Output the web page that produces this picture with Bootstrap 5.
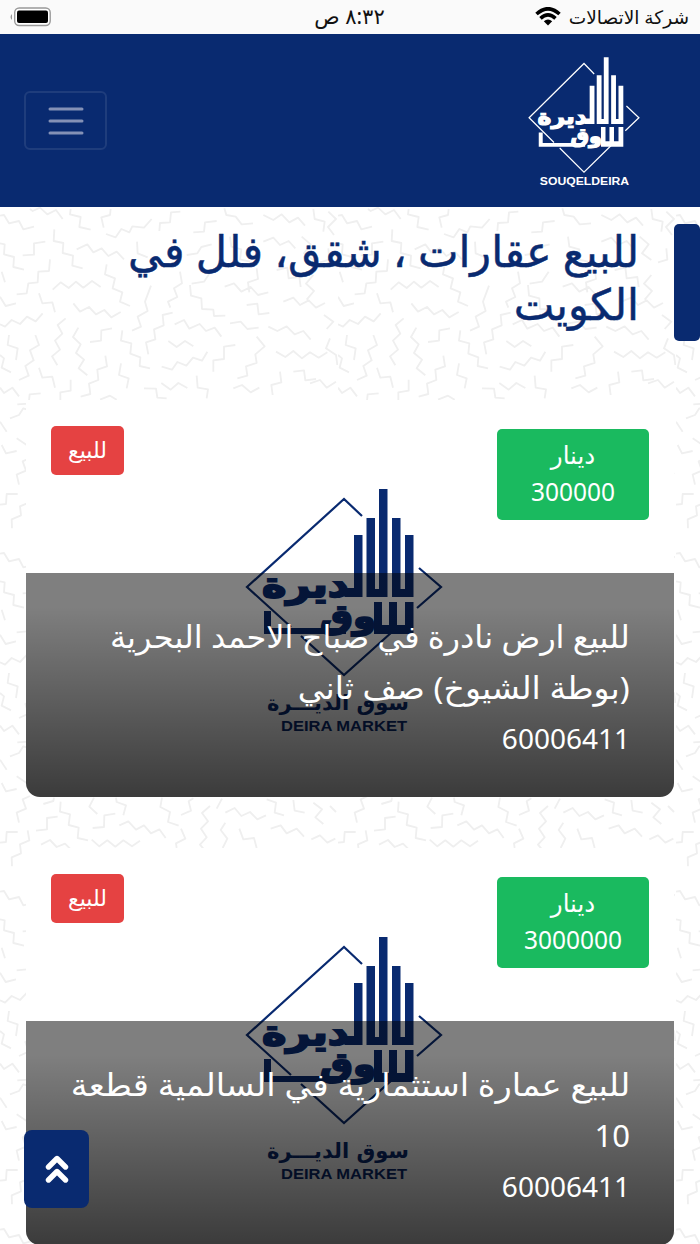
<!DOCTYPE html>
<html lang="ar" dir="rtl">

<head>
    <meta charset="UTF-8">
    <meta name="viewport" content="width=device-width, initial-scale=1.0">
    <title>سوق الديرة</title>
    <link href="https://cdn.jsdelivr.net/npm/bootstrap@5.3.0/dist/css/bootstrap.min.css" rel="stylesheet">
    <style>
        body {
            font-family: "Noto Sans", "DejaVu Sans", sans-serif;
            background: #fff;
            height: 1244px;
            overflow: hidden;
            position: relative;
        }

        .status-bar {
            height: 34px;
            background: #fafafa;
            color: #111;
            font-size: 18.6px;
            padding: 0 11px 0 10px;
        }

        .status-bar > div {
            flex: 1 1 0;
        }

        .clock {
            font-size: 21px;
            line-height: 28px;
            padding-bottom: 2px;
        }

        .site-nav {
            height: 173px;
            background: #092a70;
            padding: 0 60px 0 24px;
        }

        .site-nav .navbar-brand {
            margin: 0;
            padding: 4px 0 0;
        }

        .site-nav .navbar-toggler {
            width: 83px;
            height: 59px;
            border: 2px solid rgba(255, 255, 255, .09);
            border-radius: 6px;
            padding: 0;
        }

        .brand-name {
            font: bold 10.5px "Liberation Sans", sans-serif;
            line-height: 15px;
            color: #fff;
            transform: scaleX(1.16);
        }

        .page-area {
            position: relative;
            height: 1037px;
            overflow: hidden;
        }

        .pattern-bg {
            position: absolute;
            inset: 0;
        }

        .title-row {
            position: relative;
            height: 193px;
            padding-top: 17px;
        }

        .title-bar {
            width: 26px;
            height: 117px;
            background: #092a70;
            border-radius: 5px;
        }

        .page-title {
            color: #092a70;
            font-size: 43px;
            line-height: 53px;
            margin: 0 35px 0 0;
            white-space: nowrap;
            -webkit-text-stroke: .5px #092a70;
        }

        .fit {
            display: inline-block;
            transform-origin: right center;
            white-space: nowrap;
        }

        .estate {
            position: relative;
            height: 397px;
            margin: 0 26px 51px;
            background: #fff;
            border-radius: 0 0 14px 14px;
            overflow: hidden;
        }

        .estate-tags {
            position: relative;
            padding: 26px 25px 0;
        }

        .price-tag {
            width: 152px;
            height: 91px;
            margin-top: 3px;
            padding-bottom: 3px;
            background: #1aba5f;
            border-radius: 5px;
            font-size: 24.5px;
            line-height: 37px;
        }

        .kind-tag {
            width: 73px;
            height: 49px;
            padding-bottom: 2px;
            background: #e54242;
            border-radius: 5px;
            font-size: 22px;
        }

        .estate-logo {
            position: absolute;
            left: 219px;
            top: 87px;
            color: #092a70;
        }

        .estate-info {
            position: absolute;
            left: 0;
            right: 0;
            bottom: 0;
            height: 224px;
            padding: 38px 44px 0;
            color: #fff;
            background: linear-gradient(rgba(0, 0, 0, .5) 15%, rgba(0, 0, 0, .77));
            font-size: 31px;
            line-height: 51px;
        }

        .estate-info .phone {
            font-size: 28px;
        }

        .to-top {
            position: absolute;
            left: 24px;
            top: 1130px;
            width: 65px;
            height: 78px;
            background: #092a70;
            border: 0;
            border-radius: 8px;
        }
    </style>
</head>

<body>
    <!-- shared drawings -->
    <svg width="0" height="0" class="position-absolute">
        <defs>
            <symbol id="mark" viewBox="245 487 198 191" preserveAspectRatio="none">
                <g fill="none" stroke="currentColor" stroke-width="2.200">
                    <path d="M362 516L344 499L247 587L291 627M301 636L344 675L392 632M419 568L441 587L417 608" />
                </g>
                <path fill="currentColor" d="M354 535h8.500v62h-18v-9h9.500zM366.500 518h8.500v71h4v-100h8.500v108h-21zM392 518h8.500v71h4.500v-54h8.500v62h-21.500zM374 602h8v23h7v-23h8v23h8v-23h8.500v32h-39.500zM264 611h7v17h75v6h-82z" />
                <g fill="currentColor" stroke="currentColor" stroke-width="2" font-family="DejaVu Sans" font-weight="bold" direction="rtl">
                    <text x="349" y="597" font-size="35" textLength="87" lengthAdjust="spacingAndGlyphs">ديرة</text>
                    <text x="376" y="628" font-size="33" textLength="56" lengthAdjust="spacingAndGlyphs">وق</text>
                </g>
            </symbol>
            <pattern id="zigzag" width="338" height="338" patternUnits="userSpaceOnUse">
                <!-- drawn at three times the tile size -->
                <g transform="translate(0 -2) scale(.33333)" fill="none" stroke="#efefef" stroke-width="5.500" stroke-linejoin="round">
                    <path d="M0 32L12 30L27 55L57 48L70 73L102 65M90 12L98 18L120 8L142 28L168 15L188 42M212 12L210 28L242 36L238 66L272 74M332 12L330 30L304 37L311 68M318 87L347 97L364 72L388 82L397 64L432 68L455 42M163 73L161 108L190 114L188 144L219 152L217 182L248 190M136 110L102 115V149L68 151M0 115L14 118L12 148L42 156L40 186L72 194M230 133L262 118L280 142L305 130L325 153L350 140L372 163M150 163L147 198L115 200L113 232L85 235L80 265L50 268M5 200L15 232M158 254L182 232L206 249L228 230L250 248L276 228L302 246" />
                    <path d="M320 178L315 208L345 220L338 250L367 262L360 290L390 303M0 275L17 303L48 295M117 265L127 295L157 292L165 322M220 295L240 320L267 306L288 328L313 315L334 337L362 321M0 358L15 365L35 345L60 357L81 335L107 349L128 325M197 340L173 360L187 386L165 407L180 434L156 454L172 481M235 368L219 396L242 418L228 444L252 464L236 490L262 511M336 370L304 376L303 407L270 411M27 390L23 420L53 430L48 465M106 390L117 420L90 436L101 466L76 483L86 512L57 525M367 376L363 407L394 415L391 446L421 457L419 483L450 490M0 450L12 460L5 488L33 502M117 488L127 518L157 515L165 548M316 452L321 484L292 494L295 525L267 536L271 567L242 575M212 524V557L181 562V585M0 548L12 564L37 548L57 574M122 565L89 568L86 596L52 598M363 475L357 510L386 520L380 550M300 584L330 572L350 584" />
                    <path d="M518 323L488 330L491 361L462 373L466 403L438 412L445 448M453 242L435 290L443 318L413 335L423 365L396 377M411 110L413 145L443 157M541 20L513 22L510 52L480 54L478 78M580 82L612 80L615 52L650 48M524 358L552 345L568 371L599 357L618 378L644 368L664 395M505 408L530 426L555 408L580 424M485 485L516 494L532 471L559 482L579 458L606 467L622 440M570 240L573 272L604 280L606 312L640 314L642 333L676 332M432 550L468 551L472 578L500 580M484 534L512 554L535 534L562 549M590 512L593 548L624 553L620 580M640 500V466L672 462V425L706 420M540 200L546 235L522 250L532 276L504 290L511 308M560 150L592 145L604 126L635 118M632 200L612 230L575 236" />
                    <!-- right part of the tile -->
                    <path d="M673 10L679 30L707 35L725 58L759 55M790 30L820 45L845 28L868 52L894 38L915 62M940 12L944 42L974 50L970 80M690 95L694 125L724 133L720 163L750 170M790 110L820 98L840 120L866 108L886 130M905 95L932 118L912 145L940 165M674 245L702 235L724 260L752 246L774 270L805 262M770 190L774 222L744 232L748 262M830 195L862 188L866 220L898 216L902 246M940 210L918 236L942 258L920 284M740 300L772 296L776 328L808 324M805 365L832 378L860 364L884 388L910 378L932 404M690 355L722 350L742 372L776 368M828 440L856 456L880 438L906 460L930 442L956 458L982 442M770 395L794 424L766 448L770 474L738 484L742 512L712 520M850 290L880 278L900 300L926 286L948 308L975 294M990 400L978 430L1008 450L1012 480M930 535L960 525L980 548L1008 530M700 550L726 540L752 562L778 548M840 500L844 532L814 540L818 570M880 500L912 496L916 526L948 522M985 20L1008 42L984 66L1002 90M985 130L988 164L960 172M972 330L1000 350L980 372" />
                    <path d="M30 640L57 630L70 610L100 620M0 650L20 680M650 610L620 625L632 655M450 620L480 640L500 615L530 640M210 640L230 670L260 660L280 690M50 700L80 720L110 700M600 690L630 710L660 700M5 720L18 745L50 738M860 640L890 655M880 700L905 718" />
                    <g transform="translate(0 759)">
                        <path d="M90 0L68 10L78 38L50 50L57 80M162 5L160 15L130 24M182 17L180 47L210 55L206 87L236 95L233 126L264 133M173 62L141 66V100L108 104M282 5L268 32L292 54M348 5L350 18L378 28L370 58M346 53L313 58L312 93L278 96M358 88L385 76L408 101L432 88L453 112L478 100L497 126M123 146L150 132L170 153L195 143L210 158M275 131L298 151L322 133L346 152L370 133L396 151L420 134M0 140L18 138L20 108L53 108M83 103L88 133L60 145L63 172L35 184L36 211M486 5L481 33L510 48L504 78L536 89M580 7L566 16L573 44L543 57M630 30L606 51L624 76L603 98L620 124L600 146L610 158M666 8L650 38M543 98L556 128L528 142L530 156M676 80L662 102L682 128L668 156" />
                        <path d="M676 50L704 36L724 60L750 48L772 70L798 58M718 98L730 130L762 126L770 156M800 10L828 20L824 50L852 58M812 98L842 88L860 112L890 98L912 122M880 12L884 44L914 50M940 20L966 40L946 64L970 84M934 130L960 118L982 140L1006 128M990 30L1008 48" />
                    </g>
                </g>
            </pattern>
        </defs>
    </svg>

    <!-- phone status bar -->
    <div class="status-bar d-flex align-items-center">
        <div class="d-flex align-items-center gap-2">
            <span>شركة الاتصالات</span>
            <svg width="26" height="19" viewBox="0 0 26 19" fill="none" stroke="#000" stroke-width="3.600">
                <path d="M1.500 7Q13 -3.500 24.500 7M5.500 11.300Q13 4.500 20.500 11.300" />
                <path d="M13 18.500L8.800 14.200Q13 11 17.200 14.200Z" fill="#000" stroke="none" />
            </svg>
        </div>
        <div class="text-center clock">٨:٣٢ ص</div>
        <div class="d-flex justify-content-end">
            <svg width="41" height="20" viewBox="0 0 41 20">
                <rect x="4.700" y="1" width="35.500" height="17.500" rx="4.500" fill="#fff" stroke="#999" stroke-width="1.400" />
                <rect x="7" y="3.500" width="31" height="12.500" rx="2" />
                <path d="M2 7Q-1 10 2 13Z" fill="#999" />
            </svg>
        </div>
    </div>

    <nav class="navbar site-nav">
        <a class="navbar-brand d-flex flex-column align-items-center" href="#">
            <svg class="text-white" width="112" height="118"><use href="#mark" /></svg>
            <span class="brand-name" dir="ltr">SOUQELDEIRA</span>
        </a>
        <button class="navbar-toggler d-flex align-items-center justify-content-center" type="button" aria-label="القائمة">
            <svg width="36" height="28" viewBox="0 0 36 28" stroke="#8491b6" stroke-width="3" stroke-linecap="round">
                <path d="M2 2H34M2 14H34M2 26H34" />
            </svg>
        </button>
    </nav>

    <div class="page-area">
        <svg class="pattern-bg" width="700" height="1037">
            <rect width="700" height="1037" fill="url(#zigzag)" />
        </svg>

        <div class="title-row d-flex align-items-start">
            <div class="title-bar"></div>
            <h1 class="page-title">للبيع عقارات ، شقق، فلل في<br>الكويت</h1>
        </div>

        <div class="estate">
            <svg class="estate-logo" width="198" height="248">
                <use href="#mark" width="198" height="191" />
                <g fill="currentColor">
                    <text x="164" y="223" direction="rtl" font-family="DejaVu Sans" font-weight="bold" font-size="21" textLength="142" lengthAdjust="spacingAndGlyphs">سوق الديـــرة</text>
                    <text x="36" y="244" direction="ltr" font-family="Liberation Sans" font-weight="bold" font-size="15.500" textLength="126" lengthAdjust="spacingAndGlyphs">DEIRA MARKET</text>
                </g>
            </svg>
            <div class="estate-info">
                <div><span class="fit" style="transform:scaleX(1.034)">للبيع ارض نادرة في صباح الاحمد البحرية</span></div>
                <div><span class="fit" style="transform:scaleX(1.068)">(بوطة الشيوخ) صف ثاني</span></div>
                <div class="phone">60006411</div>
            </div>
            <div class="estate-tags d-flex justify-content-between align-items-start text-white">
                <div class="price-tag d-flex flex-column align-items-center justify-content-center"><span>دينار</span><span>300000</span></div>
                <div class="kind-tag d-flex align-items-center justify-content-center">للبيع</div>
            </div>
        </div>

        <div class="estate">
            <svg class="estate-logo" width="198" height="248">
                <use href="#mark" width="198" height="191" />
                <g fill="currentColor">
                    <text x="164" y="223" direction="rtl" font-family="DejaVu Sans" font-weight="bold" font-size="21" textLength="142" lengthAdjust="spacingAndGlyphs">سوق الديـــرة</text>
                    <text x="36" y="244" direction="ltr" font-family="Liberation Sans" font-weight="bold" font-size="15.500" textLength="126" lengthAdjust="spacingAndGlyphs">DEIRA MARKET</text>
                </g>
            </svg>
            <div class="estate-info">
                <div><span class="fit" style="transform:scaleX(1.088)">للبيع عمارة استثمارية في السالمية قطعة</span></div>
                <div>10</div>
                <div class="phone">60006411</div>
            </div>
            <div class="estate-tags d-flex justify-content-between align-items-start text-white">
                <div class="price-tag d-flex flex-column align-items-center justify-content-center"><span>دينار</span><span>3000000</span></div>
                <div class="kind-tag d-flex align-items-center justify-content-center">للبيع</div>
            </div>
        </div>
    </div>

    <button class="to-top d-flex align-items-center justify-content-center" type="button" aria-label="إلى الأعلى">
        <svg width="24" height="28" viewBox="0 0 24 28" fill="none" stroke="#fff" stroke-width="5.400" stroke-linecap="round" stroke-linejoin="round">
            <path d="M3.500 12L12 3.500L20.500 12M3.500 25L12 16.500L20.500 25" />
        </svg>
    </button>

    <script src="https://cdn.jsdelivr.net/npm/bootstrap@5.3.0/dist/js/bootstrap.bundle.min.js"></script>
</body>

</html>
